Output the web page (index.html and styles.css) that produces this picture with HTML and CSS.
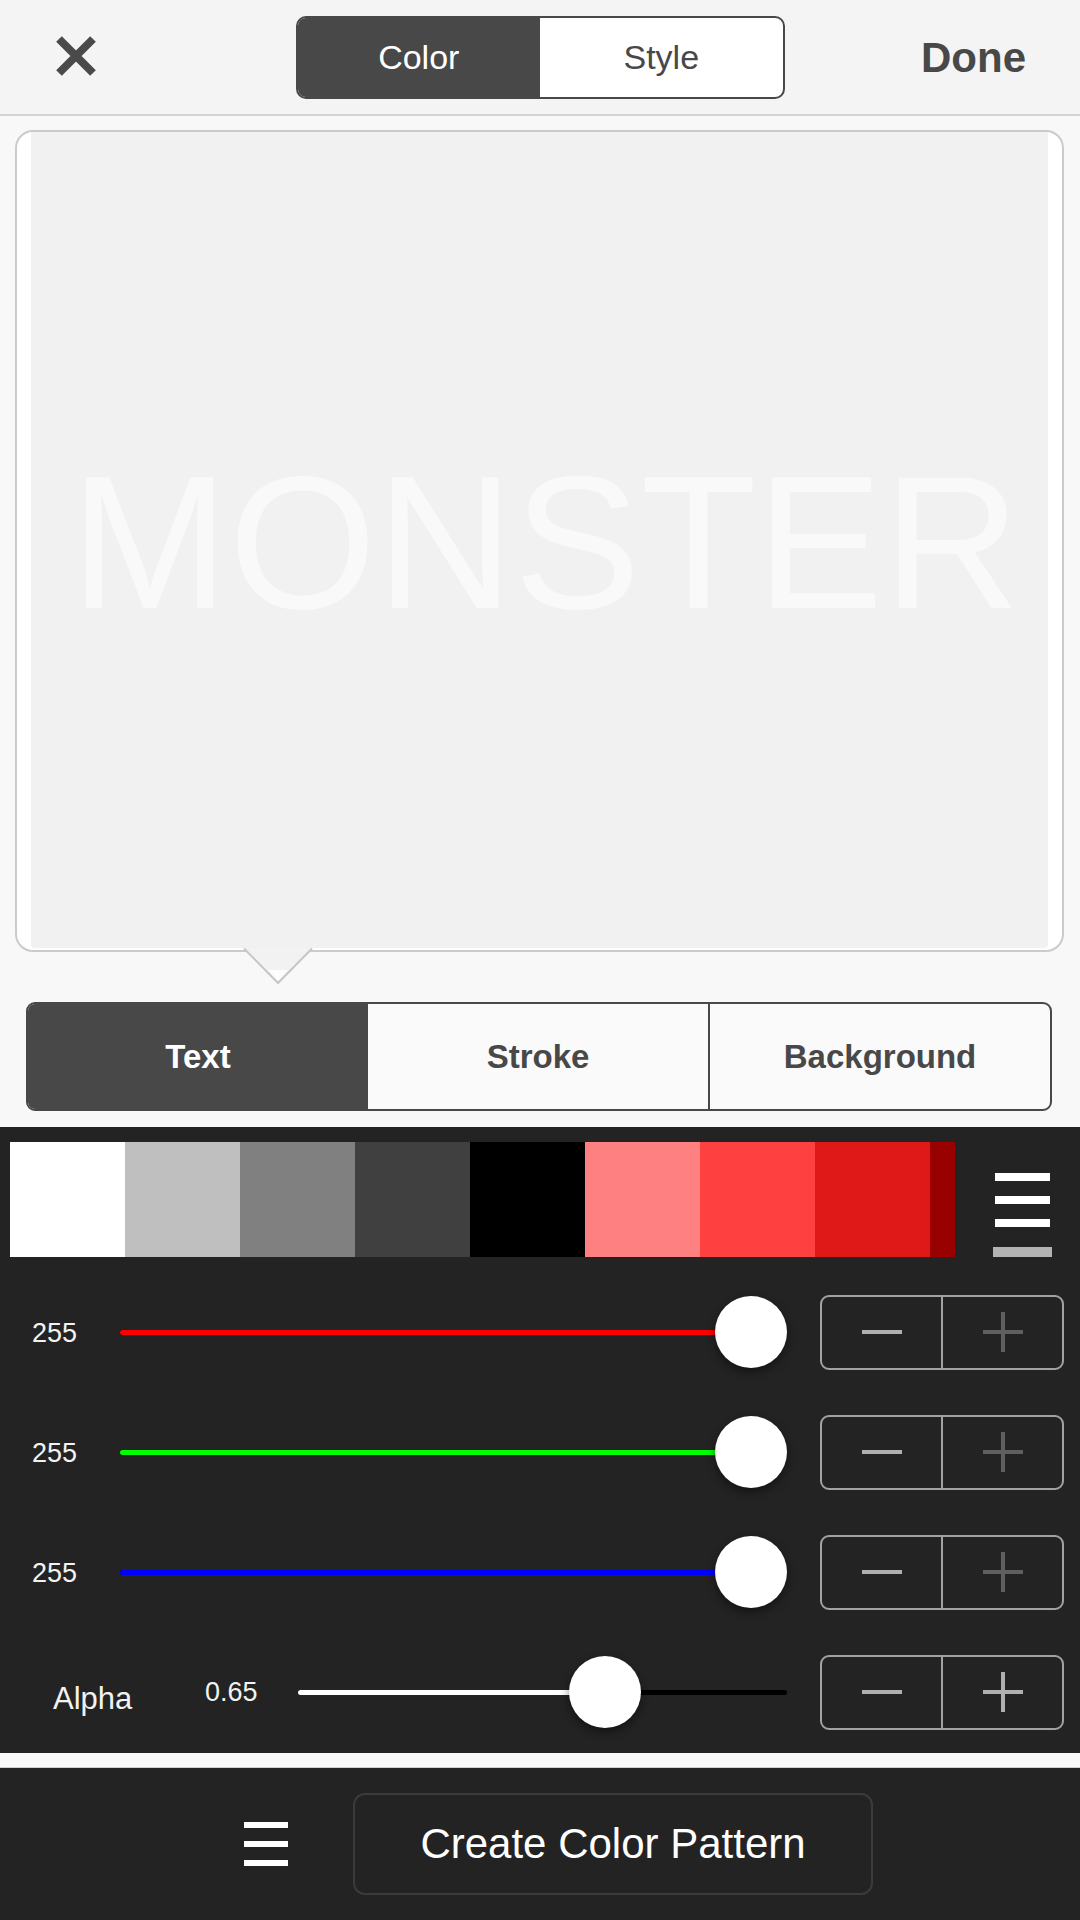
FILE: index.html
```html
<!DOCTYPE html>
<html lang="en">
<head>
  <meta charset="UTF-8">
  <meta name="viewport" content="width=device-width, initial-scale=1.0">
  <title>Text Color</title>
  <link rel="stylesheet" href="styles.css">
</head>
<body>
  <header class="topbar">
    <div class="topbar-left">
      <button class="close-btn" aria-label="Close">
        <svg viewBox="0 0 40 40" width="40" height="40"><path d="M3 3L37 37M37 3L3 37"/></svg>
      </button>
    </div>
    <div class="segment">
      <span class="segment-item active">Color</span>
      <span class="segment-item">Style</span>
    </div>
    <div class="topbar-right">
      <button class="done-btn">Done</button>
    </div>
  </header>

  <div class="preview">
    <div class="card">
      <div class="canvas"><span class="sample">MONSTER</span></div>
      <svg class="pointer" viewBox="0 0 68 36" width="68" height="36">
        <path class="pointer-fill" d="M0 0L34 35L68 0Z"/>
        <path class="pointer-tip" d="M24 22L34 33L44 22Z"/>
        <path class="pointer-edge" d="M0 0.5L34 35L68 0.5"/>
      </svg>
    </div>
  </div>

  <nav class="target-tabs">
    <button class="tab active">Text</button>
    <button class="tab">Stroke</button>
    <button class="tab">Background</button>
  </nav>

  <section class="color-panel">
    <div class="palette-row">
      <div class="palette">
        <span class="swatch sw-white"></span>
        <span class="swatch sw-light"></span>
        <span class="swatch sw-mid"></span>
        <span class="swatch sw-dark"></span>
        <span class="swatch sw-black"></span>
        <span class="swatch sw-pink"></span>
        <span class="swatch sw-coral"></span>
        <span class="swatch sw-red"></span>
        <span class="swatch sw-maroon"></span>
      </div>
      <button class="palette-menu" aria-label="Palettes">
        <span></span><span></span><span></span><span class="muted"></span>
      </button>
    </div>

    <div class="slider-row">
      <span class="value">255</span>
      <div class="track" style="--v: 1">
        <span class="fill red"></span>
        <span class="knob"></span>
      </div>
      <div class="stepper">
        <button class="minus"></button>
        <button class="plus off"></button>
      </div>
    </div>

    <div class="slider-row">
      <span class="value">255</span>
      <div class="track" style="--v: 1">
        <span class="fill green"></span>
        <span class="knob"></span>
      </div>
      <div class="stepper">
        <button class="minus"></button>
        <button class="plus off"></button>
      </div>
    </div>

    <div class="slider-row">
      <span class="value">255</span>
      <div class="track" style="--v: 1">
        <span class="fill blue"></span>
        <span class="knob"></span>
      </div>
      <div class="stepper">
        <button class="minus"></button>
        <button class="plus off"></button>
      </div>
    </div>

    <div class="slider-row alpha-row">
      <span class="alpha-label">Alpha</span>
      <span class="value">0.65</span>
      <div class="track" style="--v: 0.65">
        <span class="fill white"></span>
        <span class="knob"></span>
      </div>
      <div class="stepper">
        <button class="minus"></button>
        <button class="plus"></button>
      </div>
    </div>
  </section>

  <div class="strip"></div>

  <footer class="bottom-bar">
    <button class="list-btn" aria-label="Menu">
      <span></span><span></span><span></span>
    </button>
    <button class="pattern-btn">Create Color Pattern</button>
  </footer>
</body>
</html>
```

FILE: styles.css
```css
:root {
  --ink: #484848;
  --panel: #232323;
  --light: #f8f8f8;
  --stepper-line: #a2a2a2;
}
* { box-sizing: border-box; }
body {
  margin: 0;
  width: 1080px;
  height: 1920px;
  overflow: hidden;
  font-family: "Liberation Sans", Arial, sans-serif;
  background: var(--light);
  color: var(--ink);
}
button {
  background: none;
  border: none;
  padding: 0;
  font: inherit;
  color: inherit;
  cursor: pointer;
}

/* top bar */
.topbar {
  display: grid;
  grid-template-columns: 1fr auto 1fr;
  align-items: center;
  height: 116px;
  background: #f4f4f4;
  border-bottom: 2px solid #d3d3d3;
}
.topbar-left { padding-left: 56px; }
.close-btn { display: block; width: 40px; height: 40px; margin-top: -3px; }
.close-btn svg { display: block; }
.close-btn path { stroke: #4a4a4a; stroke-width: 8; fill: none; }
.topbar-right { text-align: right; padding-right: 54px; }
.done-btn { font-size: 42px; font-weight: bold; color: var(--ink); margin-top: 2px; }

.segment {
  display: flex;
  width: 489px;
  height: 83px;
  border: 2px solid var(--ink);
  border-radius: 10px;
  overflow: hidden;
  background: #fff;
}
.segment-item {
  flex: 1;
  display: flex;
  align-items: center;
  justify-content: center;
  font-size: 34px;
  color: var(--ink);
}
.segment-item.active { background: var(--ink); color: #fff; }

/* preview card */
.preview { padding: 14px 16px 0 15px; }
.card {
  position: relative;
  height: 822px;
  background: #fff;
  border: 2px solid #cbcbcb;
  border-radius: 18px;
  padding: 0 14px 2px;
}
.canvas {
  height: 100%;
  background: #f1f1f1;
  border-radius: 0 0 4px 4px;
  display: flex;
  align-items: center;
  justify-content: center;
}
.sample {
  font-size: 190px;
  line-height: 1;
  color: #f9f9f9;
  margin-left: 12px;
  margin-top: 4px;
}
.pointer {
  position: absolute;
  left: 227px;
  top: 100%;
  margin-top: -2px;
  overflow: visible;
}
.pointer-fill { fill: #f2f2f2; }
.pointer-tip { fill: #fdfdfd; }
.pointer-edge { fill: none; stroke: #c6c6c6; stroke-width: 2; }

/* text / stroke / background tabs */
.target-tabs {
  display: flex;
  margin: 50px 28px 0 26px;
  height: 109px;
  border: 2px solid var(--ink);
  border-radius: 9px;
  overflow: hidden;
  background: #fafafa;
}
.tab {
  flex: 1;
  font-size: 33px;
  font-weight: bold;
  color: var(--ink);
}
.tab.active { background: var(--ink); color: #fff; }
.tab + .tab + .tab { border-left: 2px solid var(--ink); }

/* colour panel */
.color-panel {
  margin-top: 16px;
  background: var(--panel);
  padding: 15px 0 1px;
}
.palette-row {
  display: flex;
  align-items: flex-end;
  padding-left: 10px;
}
.palette {
  display: flex;
  width: 945px;
  height: 115px;
  overflow: hidden;
}
.swatch { flex: 0 0 115px; }
.sw-white { background: #ffffff; }
.sw-light { background: #bfbfbf; }
.sw-mid { background: #808080; }
.sw-dark { background: #404040; }
.sw-black { background: #000000; }
.sw-pink { background: #ff8080; }
.sw-coral { background: #ff4040; }
.sw-red { background: #df1818; }
.sw-maroon { background: #990000; }

.palette-menu {
  display: flex;
  flex-direction: column;
  align-items: center;
  gap: 15px;
  width: 59px;
  margin-left: 38px;
}
.palette-menu span { display: block; width: 55px; height: 8px; background: #fff; }
.palette-menu span.muted { width: 59px; height: 10px; margin-top: 5px; background: #b3b3b3; }

.slider-row {
  display: flex;
  align-items: center;
  height: 120px;
  padding: 0 16px 0 32px;
  color: #f2f2f2;
}
.palette-row + .slider-row { margin-top: 15px; }
.value { width: 88px; font-size: 27px; margin-top: 2px; }
.alpha-row { padding-left: 53px; }
.alpha-row .value { width: 93px; margin-top: 0; }
.alpha-label { width: 152px; font-size: 31px; margin-top: 13px; }

.track {
  position: relative;
  flex: 1;
  height: 5px;
  border-radius: 3px;
  background: #000;
}
.fill {
  position: absolute;
  left: 0;
  top: 0;
  bottom: 0;
  width: calc(36px + var(--v) * (100% - 72px));
  border-radius: 3px;
}
.fill.red { background: #ff0000; }
.fill.green { background: #00ff00; }
.fill.blue { background: #0000ff; }
.fill.white { background: #fff; }
.knob {
  position: absolute;
  top: 50%;
  left: calc(var(--v) * (100% - 72px));
  width: 72px;
  height: 72px;
  margin-top: -36px;
  border-radius: 50%;
  background: #fff;
  box-shadow: 0 4px 10px rgba(0, 0, 0, 0.45);
}

.stepper {
  display: flex;
  width: 244px;
  height: 75px;
  margin-left: 33px;
  border: 2px solid var(--stepper-line);
  border-radius: 9px;
}
.stepper button {
  position: relative;
  flex: 1;
  --mark: #b0b0b0;
}
.stepper .plus { border-left: 2px solid var(--stepper-line); }
.stepper .plus.off { --mark: #5f5f5f; }
.stepper button::before,
.plus::after {
  content: "";
  position: absolute;
  left: 50%;
  top: 50%;
  background: var(--mark);
}
.stepper button::before { width: 40px; height: 4px; margin: -2px 0 0 -20px; }
.plus::after { width: 4px; height: 40px; margin: -20px 0 0 -2px; }

.strip {
  height: 15px;
  background: var(--light);
  border-bottom: 1px solid #cfcfcf;
}

/* bottom bar */
.bottom-bar {
  display: flex;
  align-items: center;
  gap: 65px;
  height: 152px;
  padding-left: 244px;
  background: var(--panel);
}
.list-btn {
  display: flex;
  flex-direction: column;
  gap: 13px;
  width: 44px;
}
.list-btn span { display: block; height: 6px; background: #fff; }
.pattern-btn {
  width: 520px;
  height: 102px;
  border: 2px solid #3b3b3b;
  border-radius: 12px;
  font-size: 42px;
  color: #fff;
}
```
